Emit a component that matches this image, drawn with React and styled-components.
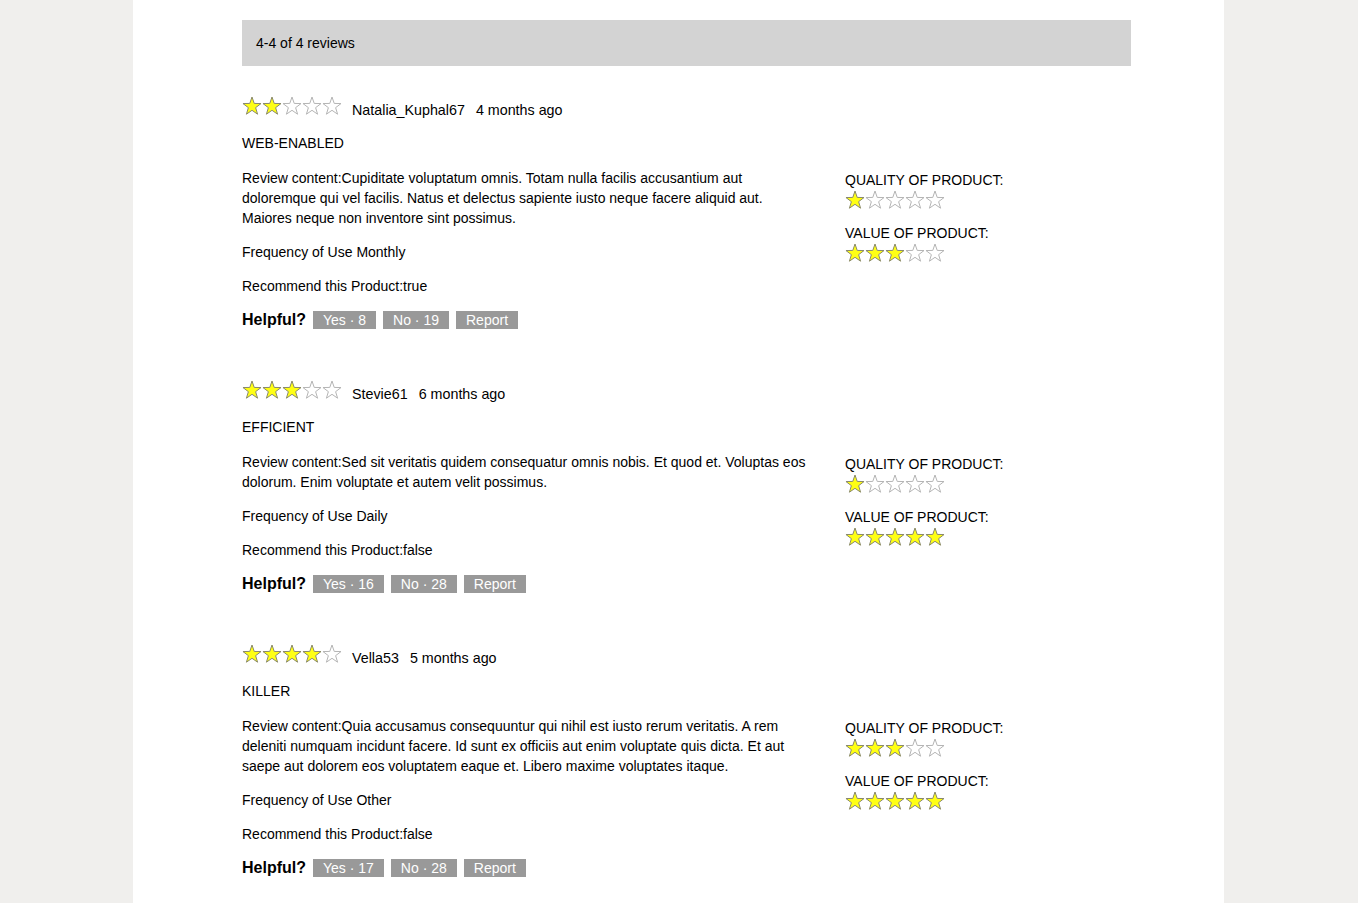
import React from "react";
import styled, { createGlobalStyle } from "styled-components";

const GlobalStyle = createGlobalStyle`
  html, body {
    margin: 0;
    padding: 0;
    background: #f0efed;
    font-family: "Liberation Sans", Arial, sans-serif;
    color: #000;
  }
`;

const Page = styled.div`
  width: 1091px;
  margin-left: 133px;
  min-height: 903px;
  background: #fff;
  padding: 20px 93px 20px 109px;
  box-sizing: border-box;
`;

const CountBar = styled.div`
  height: 46px;
  background: #d3d3d3;
  display: flex;
  align-items: center;
  padding-left: 14px;
  font-size: 14px;
`;

const List = styled.div`
  padding-top: 32px;
`;

const Review = styled.div`
  padding-bottom: 52px;
`;

const TopRow = styled.div`
  display: flex;
  align-items: center;
  height: 24px;
  font-size: 14.3px;
`;

const StarRow = styled.div`
  display: flex;
  margin-right: 10px;
  margin-top: -8px;
`;

const Name = styled.span`
  margin-right: 11px;
`;

const Title = styled.div`
  margin-top: 11px;
  font-size: 14px;
  line-height: 20px;
  text-transform: uppercase;
`;

const Body = styled.div`
  display: grid;
  grid-template-columns: 570px 1fr;
  column-gap: 33px;
  margin-top: 15px;
`;

const Para = styled.p`
  margin: 0 0 14px;
  font-size: 14px;
  line-height: 20px;
`;

const Helpful = styled.div`
  display: flex;
  align-items: center;
  gap: 7px;
  height: 20px;
`;

const HelpfulLabel = styled.span`
  font-size: 16px;
  font-weight: 700;
`;

const Pill = styled.span`
  background: #999;
  color: #fff;
  font-size: 14px;
  height: 18px;
  line-height: 18px;
  padding: 0 10px;
`;

const Ratings = styled.div`
  padding-top: 2px;
`;

const RatingLabel = styled.div`
  font-size: 14px;
  line-height: 20px;
  text-transform: uppercase;
`;

const RatingStars = styled.div`
  display: flex;
  height: 20px;
  margin-bottom: 13px;
`;

const STAR = "10,1 12.23,7.43 19.03,7.56 13.61,11.67 15.58,18.19 10,14.3 4.42,18.19 6.39,11.67 0.97,7.56 7.77,7.43";

const Star = ({ on }) => (
  <svg width="20" height="20" viewBox="0 0 20 20">
    <polygon
      points={STAR}
      fill={on ? "#ffff14" : "#fff"}
      stroke={on ? "#8a8a6a" : "#b5b5b5"}
      strokeWidth="1"
      strokeLinejoin="round"
    />
  </svg>
);

const Stars = ({ value }) =>
  [1, 2, 3, 4, 5].map((i) => <Star key={i} on={i <= value} />);

const reviews = [
  {
    rating: 2,
    user: "Natalia_Kuphal67",
    when: "4 months ago",
    title: "Web-enabled",
    body: "Cupiditate voluptatum omnis. Totam nulla facilis accusantium aut doloremque qui vel facilis. Natus et delectus sapiente iusto neque facere aliquid aut. Maiores neque non inventore sint possimus.",
    freq: "Monthly",
    rec: "true",
    yes: 8,
    no: 19,
    quality: 1,
    value: 3,
  },
  {
    rating: 3,
    user: "Stevie61",
    when: "6 months ago",
    title: "Efficient",
    body: "Sed sit veritatis quidem consequatur omnis nobis. Et quod et. Voluptas eos dolorum. Enim voluptate et autem velit possimus.",
    freq: "Daily",
    rec: "false",
    yes: 16,
    no: 28,
    quality: 1,
    value: 5,
  },
  {
    rating: 4,
    user: "Vella53",
    when: "5 months ago",
    title: "Killer",
    body: "Quia accusamus consequuntur qui nihil est iusto rerum veritatis. A rem deleniti numquam incidunt facere. Id sunt ex officiis aut enim voluptate quis dicta. Et aut saepe aut dolorem eos voluptatem eaque et. Libero maxime voluptates itaque.",
    freq: "Other",
    rec: "false",
    yes: 17,
    no: 28,
    quality: 3,
    value: 5,
  },
];

export default function App() {
  return (
    <>
      <GlobalStyle />
      <Page>
        <CountBar>4-4 of 4 reviews</CountBar>
        <List>
          {reviews.map((r) => (
            <Review key={r.user}>
              <TopRow>
                <StarRow>
                  <Stars value={r.rating} />
                </StarRow>
                <Name>{r.user}</Name>
                <span>{r.when}</span>
              </TopRow>
              <Title>{r.title}</Title>
              <Body>
                <div>
                  <Para>{`Review content:${r.body}`}</Para>
                  <Para>{`Frequency of Use ${r.freq}`}</Para>
                  <Para>{`Recommend this Product:${r.rec}`}</Para>
                  <Helpful>
                    <HelpfulLabel>Helpful?</HelpfulLabel>
                    <Pill>{`Yes · ${r.yes}`}</Pill>
                    <Pill>{`No · ${r.no}`}</Pill>
                    <Pill>Report</Pill>
                  </Helpful>
                </div>
                <Ratings>
                  <RatingLabel>Quality of Product:</RatingLabel>
                  <RatingStars>
                    <Stars value={r.quality} />
                  </RatingStars>
                  <RatingLabel>Value of Product:</RatingLabel>
                  <RatingStars>
                    <Stars value={r.value} />
                  </RatingStars>
                </Ratings>
              </Body>
            </Review>
          ))}
        </List>
      </Page>
    </>
  );
}
